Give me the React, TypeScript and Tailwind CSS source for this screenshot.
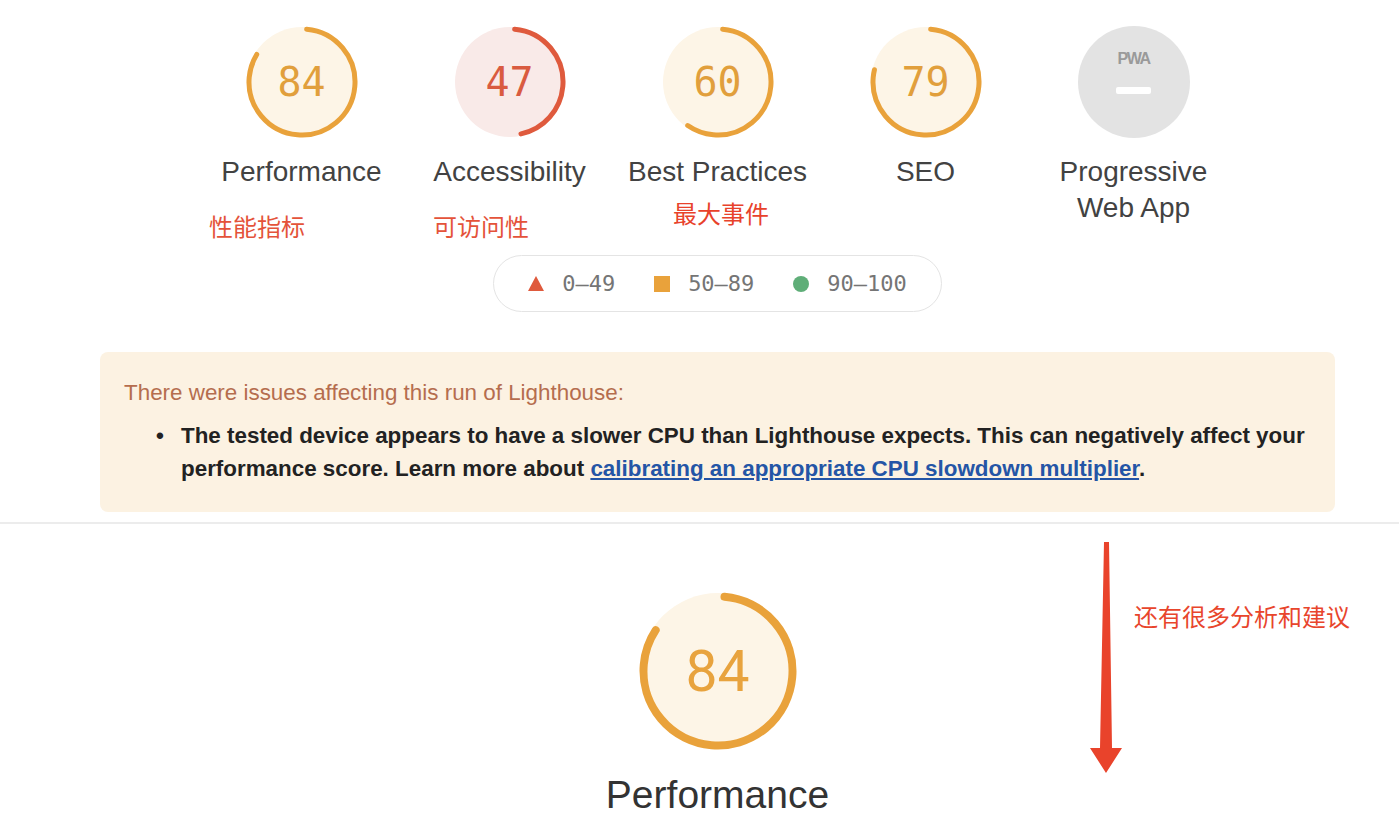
import React from 'react';

type Tone = 'orange' | 'red';

const tones: Record<Tone, { stroke: string; fill: string; text: string }> = {
  orange: { stroke: '#e9a23b', fill: '#fdf5e7', text: '#e19f3c' },
  red: { stroke: '#df5a3d', fill: '#f9eae8', text: '#d95b40' },
};

const Ring: React.FC<{ score: number; size: number; width: number; tone: Tone }> = ({ score, size, width, tone }) => {
  const c = size / 2;
  const r = c - width / 2 - 0.5;
  const len = 2 * Math.PI * r;
  const t = tones[tone];
  return (
    <svg width={size} height={size} viewBox={`0 0 ${size} ${size}`} className="absolute inset-0">
      <circle cx={c} cy={c} r={c - 1} fill={t.fill} />
      <circle
        cx={c}
        cy={c}
        r={r}
        fill="none"
        stroke={t.stroke}
        strokeWidth={width}
        strokeLinecap="round"
        strokeDasharray={`${(len * score) / 100 - 6} ${len}`}
        transform={`rotate(-85 ${c} ${c})`}
      />
    </svg>
  );
};

const Gauge: React.FC<{ score: number; tone: Tone; label: string }> = ({ score, tone, label }) => (
  <div className="w-[208px] flex flex-col items-center">
    <div className="relative w-[112px] h-[112px] flex items-center justify-center">
      <Ring score={score} size={112} width={5} tone={tone} />
      <span
        className={`relative font-['DejaVu_Sans_Mono',monospace] text-[40px] leading-none ${
          tone === 'red' ? 'text-[#d95b40]' : 'text-[#e19f3c]'
        }`}
      >
        {score}
      </span>
    </div>
    <div className="mt-[16px] text-[28px] leading-[36px] text-[#424242] text-center">{label}</div>
  </div>
);

const PwaGauge: React.FC = () => (
  <div className="w-[208px] flex flex-col items-center">
    <div className="w-[112px] h-[112px] rounded-full bg-[#e3e3e3] flex flex-col items-center">
      <span className="mt-[25px] font-['Liberation_Sans',Arial,sans-serif] font-bold text-[16px] leading-none tracking-[-1.5px] text-[#9a9a9a]">
        PWA
      </span>
      <span className="mt-[20px] w-[35px] h-[7px] rounded-[2px] bg-white" />
    </div>
    <div className="mt-[16px] text-[28px] leading-[36px] text-[#424242] text-center">
      Progressive
      <br />
      Web App
    </div>
  </div>
);

export default function App() {
  return (
    <div className="relative w-[1399px] h-[825px] overflow-hidden bg-white font-['Liberation_Sans',Arial,sans-serif]">
      <div className="ml-[100px] w-[1235px] pt-[26px] flex flex-col">
        {/* score gauges */}
        <div className="flex justify-center">
          <Gauge score={84} tone="orange" label="Performance" />
          <Gauge score={47} tone="red" label="Accessibility" />
          <Gauge score={60} tone="orange" label="Best Practices" />
          <Gauge score={79} tone="orange" label="SEO" />
          <PwaGauge />
        </div>

        {/* legend */}
        <div className="mt-[29px] flex justify-center">
          <div className="h-[57px] px-[34px] rounded-full border border-[#e4e4e4] flex items-center gap-[39px] font-['DejaVu_Sans_Mono',monospace] text-[22px] text-[#757575]">
            <div className="flex items-center gap-[18px]">
              <svg width="16" height="15" viewBox="0 0 16 15">
                <polygon points="8,0 16,15 0,15" fill="#df5a3d" />
              </svg>
              <span>0–49</span>
            </div>
            <div className="flex items-center gap-[18px]">
              <span className="w-[16px] h-[16px] bg-[#e9a23b]" />
              <span>50–89</span>
            </div>
            <div className="flex items-center gap-[18px]">
              <span className="w-[16px] h-[16px] rounded-full bg-[#5fae78]" />
              <span>90–100</span>
            </div>
          </div>
        </div>

        {/* warning */}
        <div className="mt-[40px] h-[160px] rounded-[8px] bg-[#fcf2e2] pt-[27px] pl-[24px] pr-[16px]">
          <div className="text-[22.4px] leading-[28px] text-[#b56d4e]">There were issues affecting this run of Lighthouse:</div>
          <div className="mt-[12px] flex text-[22.4px] leading-[33px] font-bold text-[#222222]">
            <span className="w-[57px] pl-[32px] shrink-0">•</span>
            <p className="whitespace-nowrap">
              The tested device appears to have a slower CPU than Lighthouse expects. This can negatively affect your
              <br />
              performance score. Learn more about{' '}
              <a className="text-[#2455a6] underline">calibrating an appropriate CPU slowdown multiplier</a>.
            </p>
          </div>
        </div>
      </div>

      <div className="mt-[10px] h-[2px] bg-[#ececec]" />

      {/* performance section */}
      <div className="ml-[100px] w-[1235px] flex flex-col items-center">
        <div className="mt-[68px] relative w-[158px] h-[158px] flex items-center justify-center">
          <Ring score={84} size={158} width={8} tone="orange" />
          <span className="relative font-['Roboto',sans-serif] text-[57px] leading-none text-[#e8a33e]">84</span>
        </div>
        <div className="mt-[23px] text-[39px] leading-[44px] text-[#333333]">Performance</div>
      </div>

      {/* annotations */}
      <div className="absolute left-[209px] top-[214px] font-['Noto_Sans_CJK_SC',sans-serif] text-[24px] leading-[24px] text-[#e4533a]">性能指标</div>
      <div className="absolute left-[433px] top-[214px] font-['Noto_Sans_CJK_SC',sans-serif] text-[24px] leading-[24px] text-[#e4533a]">可访问性</div>
      <div className="absolute left-[673px] top-[201px] font-['Noto_Sans_CJK_SC',sans-serif] text-[24px] leading-[24px] text-[#e8422b]">最大事件</div>
      <div className="absolute left-[1134px] top-[604px] font-['Noto_Sans_CJK_SC',sans-serif] text-[24px] leading-[24px] text-[#e8452c]">还有很多分析和建议</div>
      <svg className="absolute left-[1088px] top-[540px]" width="36" height="236" viewBox="0 0 36 236">
        <polygon points="16,2 21,2 24,208 34,208 18,233 2,208 12,208" fill="#e9432b" />
      </svg>
    </div>
  );
}
